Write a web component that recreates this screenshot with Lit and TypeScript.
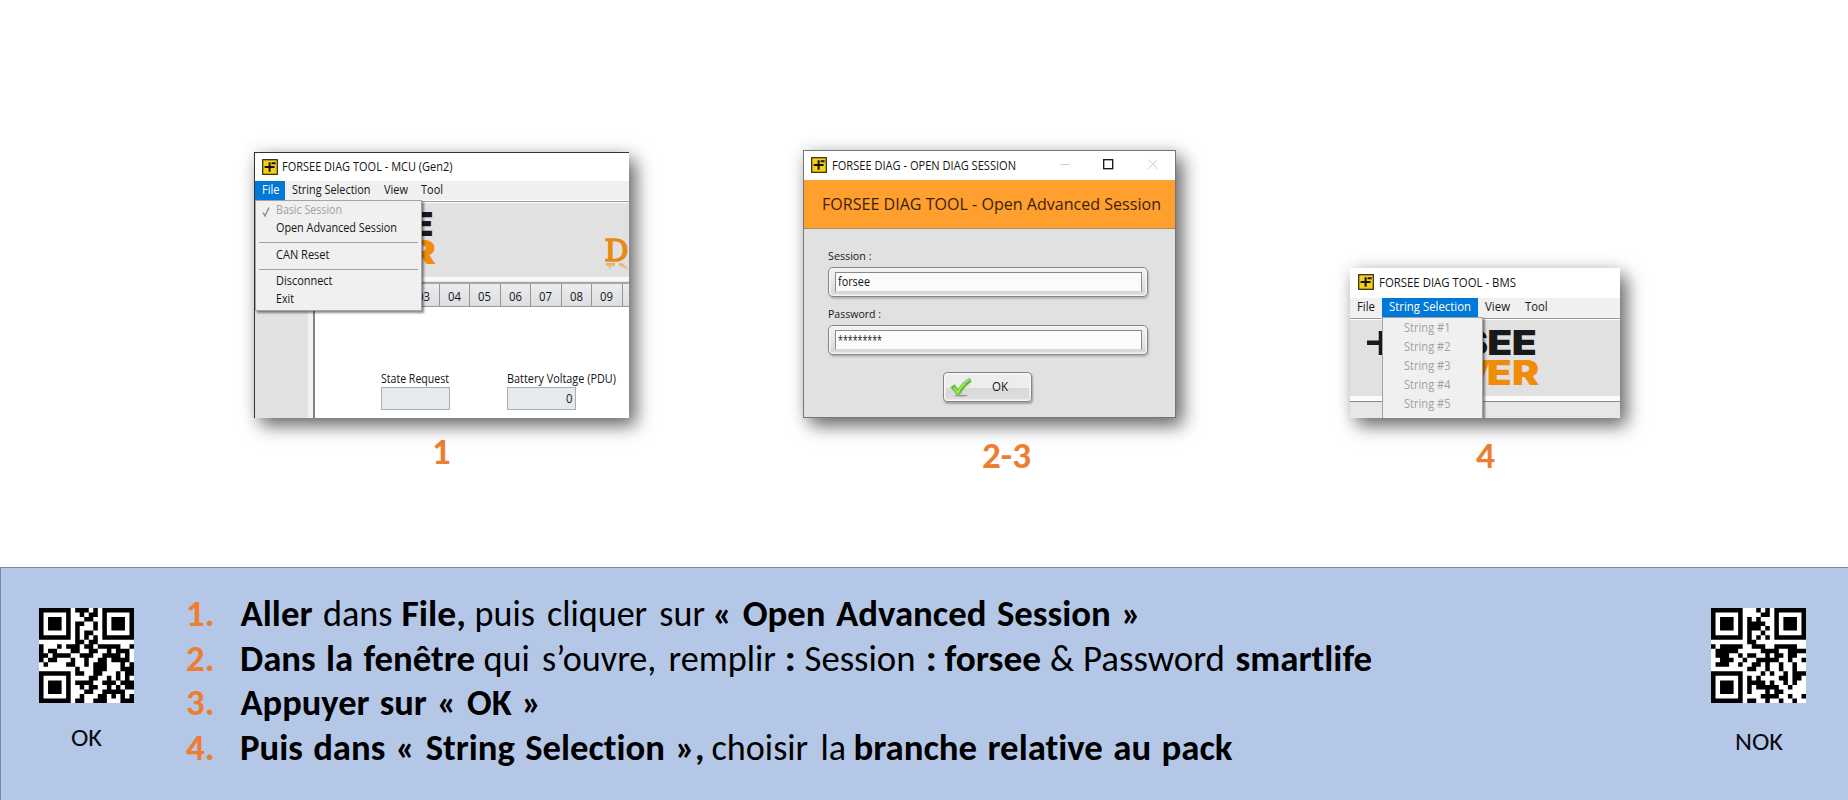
import { LitElement, html, svg, css } from "lit";
import { customElement, property } from "lit/decorators.js";

/* One line of text set to an exact width, with its baseline `base` px below the top of its box. */
const line = (s: string, w: number, size = 13, base = 13, h = 18, cls = "") => html`
  <svg class="line ${cls}" width=${w} height=${h}>
    <text y=${base} font-size=${size} textLength=${w} lengthAdjust="spacingAndGlyphs">${s}</text>
  </svg>`;

const lineStyles = css`
  :host { display: block; box-sizing: border-box; }
  * { box-sizing: border-box; }
  .line { display: block; overflow: visible; flex: none; fill: currentColor; }
`;

const appIcon = html`
  <svg class="icon" width="16" height="16" viewBox="0 0 16 16">
    <rect x=".7" y=".7" width="14.6" height="14.6" fill="#f5cf1b" stroke="#2a2508" stroke-width="1.2" />
    <path d="M2.6 8.1H12.6M7.6 3.2V12.8M9.6 4.2H13.6" fill="none" stroke="#17140a" stroke-width="2" />
  </svg>`;

const windowStyles = css`
  :host {
    font-family: "Open Sans", "Noto Sans", sans-serif;
    color: #151515;
    background: #fff;
    box-shadow: 7px 8px 17px rgba(0, 0, 0, .56), 0 0 16px rgba(0, 0, 0, .1);
  }
  .title { display: flex; align-items: flex-start; background: #fff; }
  .icon { display: block; flex: none; }
  .menubar { display: flex; height: 19px; background: #f0f0f0; }
  .entry { height: 19px; }
  .active { background: #0078d7; color: #fff; }
  .dropdown {
    position: absolute;
    background: #f0f0f0;
    border: 1px solid #a3a3a3;
    box-shadow: 2px 2px 2px rgba(0, 0, 0, .45);
  }
  .off { color: #a0a0a0; }
`;

@customElement("mcu-window")
class McuWindow extends LitElement {
  static styles = [lineStyles, windowStyles, css`
    :host { width: 375px; height: 266px; border-top: 1px solid #333; border-left: 1px solid #333; position: relative; }
    .clip { height: 265px; overflow: hidden; position: relative; }
    .title { height: 28px; padding: 6px 0 0 7px; gap: 4px; }
    .e1 { width: 30px; padding-left: 7px; }
    .e2 { padding-left: 7px; }
    .e3, .e4 { padding-left: 13px; }
    .banner { height: 76px; margin-top: 1px; border-top: 1px solid #999; background: #e1e1e1; box-shadow: inset 0 1px #fff; display: flex; justify-content: flex-end; }
    .strip { height: 7px; border-top: 4px solid #fafafa; border-bottom: 2px solid #a6a6a6; background: #e6e6e6; }
    .tabs { display: flex; height: 23px; padding-left: 154px; background: #e1e1e1; border-bottom: 1px solid #999; }
    .tab { flex: none; width: 30.5px; padding-left: 8px; border-right: 1px solid #969696; background: linear-gradient(#ececee, #dcdee1); }
    .content { display: flex; height: 112px; }
    .side { width: 58px; border-right: 5px solid #f2f2f2; background: #e1e1e1; }
    .panel { flex: 1; border-left: 2px solid #858585; display: flex; padding: 64px 0 0 66px; gap: 57px; }
    .value { width: 69px; height: 23px; background: #e7eaed; border: 1px solid #abaeb1; padding-left: 58px; }
    .field { width: 69px; }
    .dropdown { left: 0; top: 47px; width: 167px; height: 111px; padding: 1px 3px; }
    .item { display: flex; height: 18px; padding-left: 17px; }
    .item.checked { padding-left: 3px; gap: 6px; }
    .sep { height: 1px; background: #a0a0a0; margin: 4px 0 3.5px; }
    .logo { display: block; overflow: visible; }
  `];
  render() {
    return html`
      <div class="clip">
        <div class="title">${appIcon}${line("FORSEE DIAG TOOL - MCU (Gen2)", 170.5, 13, 12)}</div>
        <div class="menubar">
          <div class="entry active e1">${line("File", 17.5, 12.5)}</div>
          <div class="entry e2">${line("String Selection", 78.5, 12.5)}</div>
          <div class="entry e3">${line("View", 24, 12.5)}</div>
          <div class="entry e4">${line("Tool", 22, 12.5)}</div>
        </div>
        <div class="banner">
          <svg class="logo" width="225" height="74" font-family="Inter, sans-serif" font-weight="900">
            <g transform="scale(1.22 1)" font-size="33">
              <text x="4.2" y="33.9" fill="#191919">E</text>
              <text x="4.2" y="62" fill="#f08c08">R</text>
            </g>
            <defs>
              <linearGradient id="fade" gradientUnits="userSpaceOnUse" x1="0" y1="61" x2="0" y2="69">
                <stop offset="0" stop-color="#e78c1c" stop-opacity=".65" />
                <stop offset="1" stop-color="#e78c1c" stop-opacity="0" />
              </linearGradient>
            </defs>
            <text x="200.5" y="59" font-size="30" font-weight="400" font-family="'DejaVu Serif', serif" fill="#e98a10" stroke="#e98a10" stroke-width="1.5">D</text>
            <path d="M202 62.5H211M206 62V70M215 62.5Q221 63 224 69" fill="none" stroke="url(#fade)" stroke-width="3" />
          </svg>
        </div>
        <div class="strip"></div>
        <div class="tabs">
          ${["03", "04", "05", "06", "07", "08", "09", ""].map(n => html`<div class="tab">${n ? line(n, 13, 12.5, 16.5) : ""}</div>`)}
        </div>
        <div class="content">
          <div class="side"></div>
          <div class="panel">
            <div class="field">${line("State Request", 68, 12.5, 12, 16)}<div class="value"></div></div>
            <div class="field">${line("Battery Voltage (PDU)", 109, 12.5, 12, 16)}<div class="value">${line("0", 6.5, 12.5, 15)}</div></div>
          </div>
        </div>
        <div class="dropdown">
          <div class="item checked off">
            <svg width="8" height="18"><path d="M1 10.5L3 14L7 5.5" fill="none" stroke="#8c8c8c" stroke-width="1.5" /></svg>
            ${line("Basic Session", 66, 12.5, 12)}
          </div>
          <div class="item">${line("Open Advanced Session", 121, 12.5, 12)}</div>
          <div class="sep"></div>
          <div class="item">${line("CAN Reset", 53.5, 12.5, 12)}</div>
          <div class="sep"></div>
          <div class="item">${line("Disconnect", 56.5, 12.5, 12.3)}</div>
          <div class="item">${line("Exit", 18, 12.5, 12.3)}</div>
        </div>
      </div>`;
  }
}

@customElement("session-dialog")
class SessionDialog extends LitElement {
  static styles = [lineStyles, windowStyles, css`
    :host { width: 373px; height: 268px; border: 1px solid #757575; background: #e1e1e1; }
    .title { height: 29px; padding: 6px 0 0 7px; gap: 5px; }
    .controls { display: block; flex: none; margin-left: 38px; }
    .banner { height: 49px; background: #ff9f2d; border-bottom: 1px solid #a98d69; padding: 10px 0 0 18px; color: #3a230a; }
    .form { padding: 19px 0 0 24px; height: 142.5px; font-weight: 500; }
    .box {
      width: 320px; height: 30px; margin: 2.5px 0 9.5px; padding: 4px 5.5px;
      border: 1.5px solid #858585; border-radius: 5px;
      background: linear-gradient(#f4f4f4, #d5d5d5);
      box-shadow: inset 0 0 0 1.5px #f6f6f6, 1px 2px 2px rgba(0, 0, 0, .2);
    }
    .input { height: 20px; background: #fbfbfb; border: 1.5px solid #8a8a8a; border-bottom-color: #d8d8d8; padding-left: 2px; }
    .ok {
      display: flex; width: 89px; height: 30px; margin-left: 138.5px; padding: 4px 0 0 5px; gap: 19px;
      border: 1.5px solid #858585; border-radius: 4px;
      background: linear-gradient(#ededed 52%, #d8d8d8 54%, #dedede);
      box-shadow: inset 0 0 0 1.5px #f7f7f7, 1px 2px 2px rgba(0, 0, 0, .28);
    }
    .tick { display: block; flex: none; }
  `];
  render() {
    return html`
      <div class="title">
        ${appIcon}${line("FORSEE DIAG - OPEN DIAG SESSION", 184, 13, 12.5)}
        <svg class="controls" width="102" height="18" fill="none">
          <path d="M1 7.5H11" stroke="#cfcfcf" />
          <rect x="44.7" y="2.7" width="9" height="9" stroke="#111" stroke-width="1.3" />
          <path d="M89 2.5L98.5 12M98.5 2.5L89 12" stroke="#cdcdcd" />
        </svg>
      </div>
      <div class="banner">${line("FORSEE DIAG TOOL - Open Advanced Session", 339, 16.5, 20, 26)}</div>
      <div class="form">
        ${line("Session :", 43.5, 11, 12, 16)}
        <div class="box"><div class="input">${line("forsee", 32, 12, 13)}</div></div>
        ${line("Password :", 53, 11, 12, 16)}
        <div class="box"><div class="input">${line("*********", 44, 12, 13.5)}</div></div>
      </div>
      <div class="ok">
        <svg class="tick" width="24" height="20" viewBox="0 0 24 20">
          <ellipse cx="12" cy="18.6" rx="7" ry=".8" fill="#999" />
          <path d="M1.5 10.5L5.5 7.5L9 12Q14 4.5 20.5 1L22.5 4.5Q15 10 10.5 18H8Q5 13 1.5 10.5Z" fill="#59b83f" stroke="#8ccf7c" stroke-width=".8" />
          <path d="M5 10.5L9 15.5Q12 9 16 6.5" fill="none" stroke="#a8ea45" stroke-width="2" />
          <path d="M15 6.5L20.5 2.5" stroke="#aee0a5" stroke-width="1.5" />
        </svg>
        ${line("OK", 16, 13, 14)}
      </div>`;
  }
}

@customElement("bms-window")
class BmsWindow extends LitElement {
  static styles = [lineStyles, windowStyles, css`
    :host { width: 270px; height: 150px; }
    .clip { height: 150px; overflow: hidden; position: relative; }
    .title { height: 30px; padding: 6px 0 0 8px; gap: 5px; }
    .e1 { width: 32px; padding-left: 7px; }
    .e2 { width: 96px; padding-left: 7px; }
    .e3 { padding-left: 7px; }
    .e4 { padding-left: 14.5px; }
    .menubar { height: 20px; }
    .banner { height: 77.5px; border-top: 1px solid #999; box-shadow: inset 0 1px #fff; background: #e1e1e1; }
    .strip { height: 6px; border-top: 4px solid #fafafa; border-bottom: 1px solid #888; }
    .foot { height: 20px; background: #e7e7e7; }
    .dropdown { left: 32px; top: 49px; width: 101px; height: 110px; padding: 1px 0 0 21px; }
    .item { height: 19px; }
    .logo { display: block; }
  `];
  render() {
    return html`
      <div class="clip">
        <div class="title">${appIcon}${line("FORSEE DIAG TOOL - BMS", 137)}</div>
        <div class="menubar">
          <div class="entry e1">${line("File", 18, 12.5)}</div>
          <div class="entry active e2">${line("String Selection", 82, 12.5)}</div>
          <div class="entry e3">${line("View", 25, 12.5)}</div>
          <div class="entry e4">${line("Tool", 22.5, 12.5)}</div>
        </div>
        <div class="banner">
          <svg class="logo" width="270" height="76" font-family="Inter, sans-serif" font-weight="900" font-size="33.5">
            <path d="M17 23.8H40M31 12V36" stroke="#191919" stroke-width="4.5" />
            <g transform="scale(1.22 1)">
              <text x="91 112.4 132.6" y="36" fill="#191919">SEE</text>
              <text x="89 112 132.8" y="66.3" fill="#f08c08">VER</text>
            </g>
          </svg>
        </div>
        <div class="strip"></div>
        <div class="foot"></div>
        <div class="dropdown">
          ${[1, 2, 3, 4, 5].map(n => html`<div class="item off">${line(`String #${n}`, 46.5, 12.5, 13)}</div>`)}
        </div>
      </div>`;
  }
}

/* Version 1-M QR symbol for an upper-case alphanumeric text. */
const ALNUM = "0123456789ABCDEFGHIJKLMNOPQRSTUVWXYZ $%*+-./:";
const FORMAT_M: Record<number, string> = { 2: "101111001111100", 4: "100010111111001" };

function codewords(text: string): number[] {
  const put = (v: number, n: number) => v.toString(2).padStart(n, "0");
  let bits = put(2, 4) + put(text.length, 9);
  for (let i = 0; i < text.length; i += 2) {
    const a = ALNUM.indexOf(text[i]);
    bits += i + 1 < text.length ? put(a * 45 + ALNUM.indexOf(text[i + 1]), 11) : put(a, 6);
  }
  bits += "0000";
  while (bits.length % 8) bits += "0";
  const data: number[] = [];
  for (let i = 0; i < bits.length; i += 8) data.push(parseInt(bits.slice(i, i + 8), 2));
  for (let p = 0; data.length < 16; p++) data.push(p % 2 ? 0x11 : 0xec);

  const mul = (a: number, b: number) => {
    let r = 0;
    for (; b; b >>= 1) {
      if (b & 1) r ^= a;
      a <<= 1;
      if (a & 256) a ^= 0x11d;
    }
    return r;
  };
  let gen = [1];
  for (let i = 0, root = 1; i < 10; i++, root = mul(root, 2)) {
    const next = [...gen, 0];
    gen.forEach((g, k) => (next[k + 1] ^= mul(g, root)));
    gen = next;
  }
  const rem = [...data, ...Array(10).fill(0)];
  for (let i = 0; i < 16; i++) {
    const f = rem[i];
    gen.forEach((g, k) => (rem[i + k] ^= mul(g, f)));
  }
  return [...data, ...rem.slice(16)];
}

function qrPath(text: string, mask: number): string {
  const m: (boolean | null)[][] = Array.from({ length: 21 }, () => Array(21).fill(null));
  const finder = (r0: number, c0: number) => {
    for (let r = -1; r < 8; r++) for (let c = -1; c < 8; c++) {
      if (r0 + r < 0 || r0 + r > 20 || c0 + c < 0 || c0 + c > 20) continue;
      const d = Math.max(Math.abs(r - 3), Math.abs(c - 3));
      m[r0 + r][c0 + c] = d !== 2 && d < 4;
    }
  };
  finder(0, 0); finder(0, 14); finder(14, 0);
  for (let i = 8; i < 13; i++) m[6][i] = m[i][6] = i % 2 === 0;
  const f = [...FORMAT_M[mask]].map(b => b === "1");
  for (let i = 0; i < 15; i++) {
    if (i < 6) m[8][i] = f[i];
    else if (i === 6) m[8][7] = f[i];
    else if (i === 7) m[8][8] = f[i];
    else if (i === 8) m[7][8] = f[i];
    else m[14 - i][8] = f[i];
    if (i < 7) m[20 - i][8] = f[i];
    else m[8][6 + i] = f[i];
  }
  m[13][8] = true;
  const bits = codewords(text).map(b => b.toString(2).padStart(8, "0")).join("");
  let k = 0, up = true;
  for (let c = 20; c > 0; c -= 2) {
    if (c === 6) c--;
    for (let i = 0; i < 21; i++) {
      const r = up ? 20 - i : i;
      for (const cc of [c, c - 1]) {
        if (m[r][cc] !== null) continue;
        const flip = mask === 2 ? cc % 3 === 0 : (Math.floor(r / 2) + Math.floor(cc / 3)) % 2 === 0;
        m[r][cc] = (bits[k++] === "1") !== flip;
      }
    }
    up = !up;
  }
  let d = "";
  m.forEach((row, r) => row.forEach((on, c) => { if (on) d += `M${c} ${r}h1v1h-1z`; }));
  return d;
}

@customElement("qr-symbol")
class QrSymbol extends LitElement {
  @property() text = "";
  @property({ type: Number }) mask = 2;
  static styles = css`
    :host { display: block; width: 95px; height: 95px; background: #fff; }
    svg { display: block; }
  `;
  render() {
    return html`<svg width="95" height="95" viewBox="0 0 21 21"><path d=${qrPath(this.text, this.mask)} fill="#000" /></svg>`;
  }
}

/* A run is [text, left edge, right edge, bold]. */
type Run = [string, number, number, boolean];
const STEPS: Run[][] = [
  [["Aller", -.5, 71.5, true], ["dans", 82, 151.5, false], ["File,", 160.5, 225, true], ["puis cliquer sur", 233.5, 464, false], ["« Open Advanced Session »", 471.5, 900, true]],
  [["Dans la fenêtre", -1, 234, true], ["qui s’ouvre, remplir", 242.5, 535, false], [":", 543.5, 555, true], ["Session", 563.5, 674.5, false], [":", 684.5, 696, true], ["forsee", 703.5, 800, true], ["&", 809, 833, false], ["Password", 842, 984, false], ["smartlife", 994.5, 1131, true]],
  [["Appuyer sur « OK »", -.5, 300.5, true]],
  [["Puis dans « String Selection »,", -1, 463.5, true], ["choisir la", 470.5, 605, false], ["branche relative au pack", 612.5, 991.5, true]],
];

@customElement("app-root")
class AppRoot extends LitElement {
  static styles = [lineStyles, css`
    :host { width: 1848px; height: 800px; background: #fff; font-family: Carlito, Calibri, Lato, sans-serif; overflow: hidden; }
    .figures { display: flex; align-items: flex-start; height: 567px; padding-left: 254px; }
    figure { margin: 0; }
    .f1 { margin-top: 152px; }
    .f2 { margin: 150px 0 0 174px; }
    .f3 { margin: 268px 0 0 174px; }
    figcaption { display: flex; justify-content: center; height: 50px; padding-top: 16px; color: #ed7d31; font-weight: 700; }
    .f2 figcaption { padding: 20px 0 0 33px; }
    .f3 figcaption { padding-top: 20px; }
    .bar { display: flex; height: 233px; background: #b4c7e7; border-top: 1px solid #7c8798; border-left: 1px solid #7c8798; }
    .code { padding: 40px 0 0 38px; width: 185px; color: #0a0a12; }
    .code .line { margin: 22px 0 0 32px; }
    .code.right { padding-left: 24px; width: 160px; }
    .code.right .line { margin: 26px 0 0 24px; }
    .steps { list-style: none; margin: 0; padding: 25px 0 0; width: 1501px; }
    .steps li { display: flex; height: 44.6px; gap: 26px; }
    .num { color: #ed7d31; font-weight: 700; }
    .run { display: block; overflow: visible; font-variant-ligatures: none; word-spacing: 4px; }
    .b { font-weight: 700; word-spacing: 2px; }
  `];
  render() {
    return html`
      <div class="figures">
        <figure class="f1"><mcu-window></mcu-window><figcaption>${line("1", 18.5, 37, 30, 34)}</figcaption></figure>
        <figure class="f2"><session-dialog></session-dialog><figcaption>${line("2-3", 49, 37, 30, 34)}</figcaption></figure>
        <figure class="f3"><bms-window></bms-window><figcaption>${line("4", 19, 37, 30, 34)}</figcaption></figure>
      </div>
      <div class="bar">
        <div class="code"><qr-symbol text="OUI" mask="4"></qr-symbol>${line("OK", 31, 24, 20.5, 26)}</div>
        <ol class="steps">
          ${STEPS.map((runs, i) => html`
            <li>
              <span class="num">${line(`${i + 1}.`, 28.5, 36, 32.5, 44)}</span>
              <svg class="run" width="1140" height="44">
                ${runs.map(([s, a, b, bold]) => svg`<text class=${bold ? "b" : ""} x=${a} y="32.5" font-size="36" textLength=${b - a} lengthAdjust="spacingAndGlyphs">${s}</text>`)}
              </svg>
            </li>`)}
        </ol>
        <div class="code right"><qr-symbol text="NON" mask="2"></qr-symbol>${line("NOK", 48, 25, 21, 26)}</div>
      </div>`;
  }
}
